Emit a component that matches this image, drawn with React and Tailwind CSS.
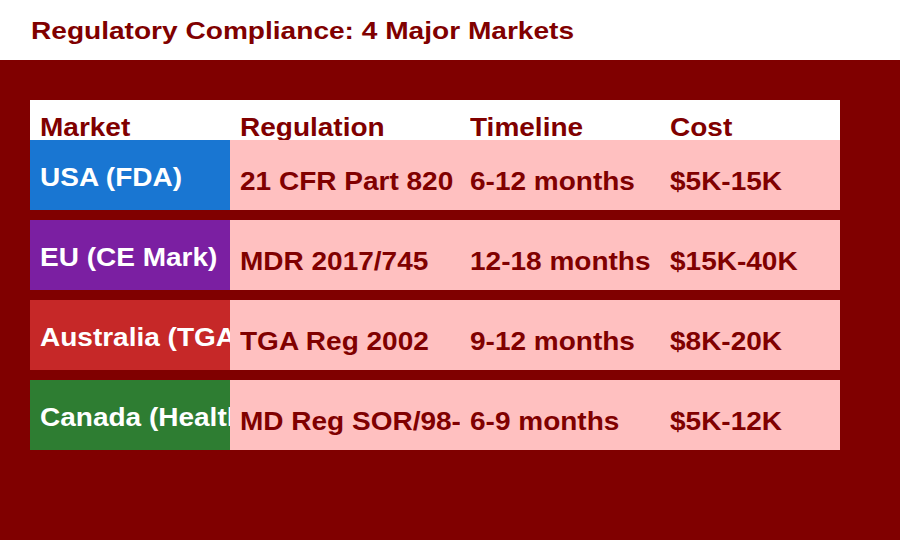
export default function App() {
  const rows = [
    { m: "USA (FDA)", bg: "bg-[#1976d2]", r: "21 CFR Part 820", t: "6-12 months", c: "$5K-15K" },
    { m: "EU (CE Mark)", bg: "bg-[#7b1fa2]", r: "MDR 2017/745", t: "12-18 months", c: "$15K-40K" },
    { m: "Australia (TGA)", bg: "bg-[#c62828]", r: "TGA Reg 2002", t: "9-12 months", c: "$8K-20K" },
    { m: "Canada (Health Canada)", bg: "bg-[#2e7d32]", r: "MD Reg SOR/98-282", t: "6-9 months", c: "$5K-12K" },
  ];
  const S = ({ children }) => (
    <span className="inline-block scale-x-[1.12] origin-left whitespace-nowrap">{children}</span>
  );
  return (
    <div className="w-[900px] h-[540px] bg-[#800000] flex flex-col font-['Liberation_Sans',Arial,sans-serif] font-bold overflow-hidden">
      <div className="h-[60px] bg-white flex items-start px-[31px] pt-[17px] text-[24px] leading-[28px] text-[#800000]">
        <span className="inline-block scale-x-[1.17] origin-left whitespace-nowrap">Regulatory Compliance: 4 Major Markets</span>
      </div>
      <div className="flex flex-col px-[30px] pt-[40px] w-[870px] gap-[10px]">
        <div className="h-[40px] bg-white flex items-end overflow-hidden text-[25px] text-[#800000] leading-[28px] -mb-[10px]">
          <div className="w-[200px] pl-[10px] -mb-[1px]"><S>Market</S></div>
          <div className="w-[230px] pl-[10px] -mb-[1px]"><S>Regulation</S></div>
          <div className="w-[200px] pl-[10px] -mb-[1px]"><S>Timeline</S></div>
          <div className="w-[180px] pl-[10px] -mb-[1px]"><S>Cost</S></div>
        </div>
        {rows.map((r) => (
          <div key={r.m} className="h-[70px] bg-[#ffc0c0] flex text-[25px] leading-[28px]">
            <div className={`w-[200px] ${r.bg} text-white pl-[10px] pt-[23px] whitespace-nowrap overflow-hidden`}><S>{r.m}</S></div>
            <div className="w-[230px] pl-[10px] pt-[27px] text-[#800000] whitespace-nowrap overflow-hidden"><S>{r.r}</S></div>
            <div className="w-[200px] pl-[10px] pt-[27px] text-[#800000] whitespace-nowrap overflow-hidden"><S>{r.t}</S></div>
            <div className="w-[180px] pl-[10px] pt-[27px] text-[#800000] whitespace-nowrap overflow-hidden"><S>{r.c}</S></div>
          </div>
        ))}
      </div>
    </div>
  );
}
